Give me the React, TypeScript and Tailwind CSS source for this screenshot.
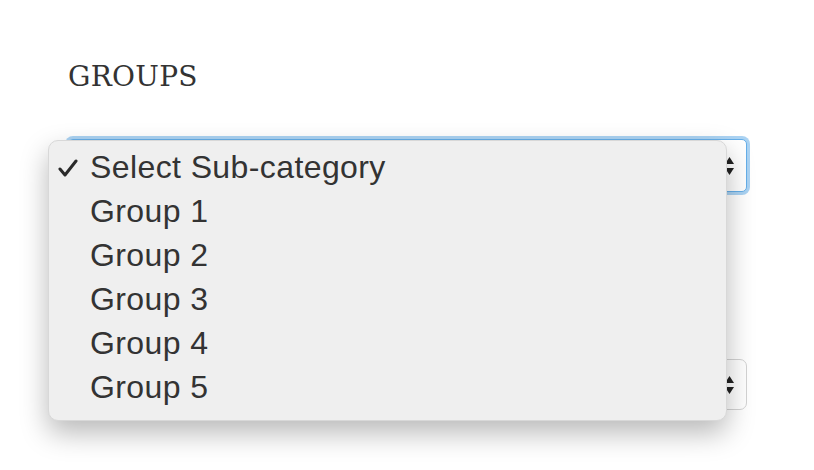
const groups = ["Group 1", "Group 2", "Group 3", "Group 4", "Group 5"]

const Arrows = () => (
    <svg width="9" height="22" viewBox="0 0 9 22" className="text-[#222]">
        <path d="M4.5 2 L9 9 L0 9 Z" fill="currentColor" />
        <path d="M0 13 L9 13 L4.5 20 Z" fill="currentColor" />
    </svg>
)

export default function App() {
    return (
        <div className="relative w-[814px] h-[470px] bg-white overflow-hidden">
            <div className="pl-[68px] pr-[67px] pt-[60px]">
                <h2 className="font-['DejaVu_Serif',serif] text-[28px] leading-[34px] text-[#333] tracking-[0.3px]">
                    GROUPS
                </h2>
                <div className="mt-[45px] h-[53px] rounded-[5px] border border-[#66afe9] shadow-[0_0_0_3px_rgba(102,175,233,0.55)] bg-white flex items-center justify-end pr-[12px]">
                    <Arrows />
                </div>
                <div className="mt-[167px] h-[51px] rounded-[7px] border border-[#d4d4d4] bg-white flex items-center justify-end pr-[12px]">
                    <Arrows />
                </div>
            </div>

            <div className="absolute left-[48px] top-[140px] w-[679px] rounded-[10px] bg-[#efefef] border border-[#d8d8d8] shadow-[0_12px_28px_rgba(0,0,0,0.28)] pt-[4px] pb-[11px] font-['Liberation_Sans',Arial,sans-serif] text-[32px] tracking-[0.4px] text-[#333]">
                <div className="relative h-[44px] flex items-center pl-[41px]">
                    <svg width="20" height="18" viewBox="0 0 20 18" className="absolute left-[9px] top-[14px]">
                        <path d="M2 10 L7 16 L18 2" fill="none" stroke="#2a2a2a" strokeWidth="3" strokeLinecap="round" strokeLinejoin="round" />
                    </svg>
                    Select Sub-category
                </div>
                {groups.map((g) => (
                    <div key={g} className="h-[44px] flex items-center pl-[41px]">
                        {g}
                    </div>
                ))}
            </div>
        </div>
    )
}
